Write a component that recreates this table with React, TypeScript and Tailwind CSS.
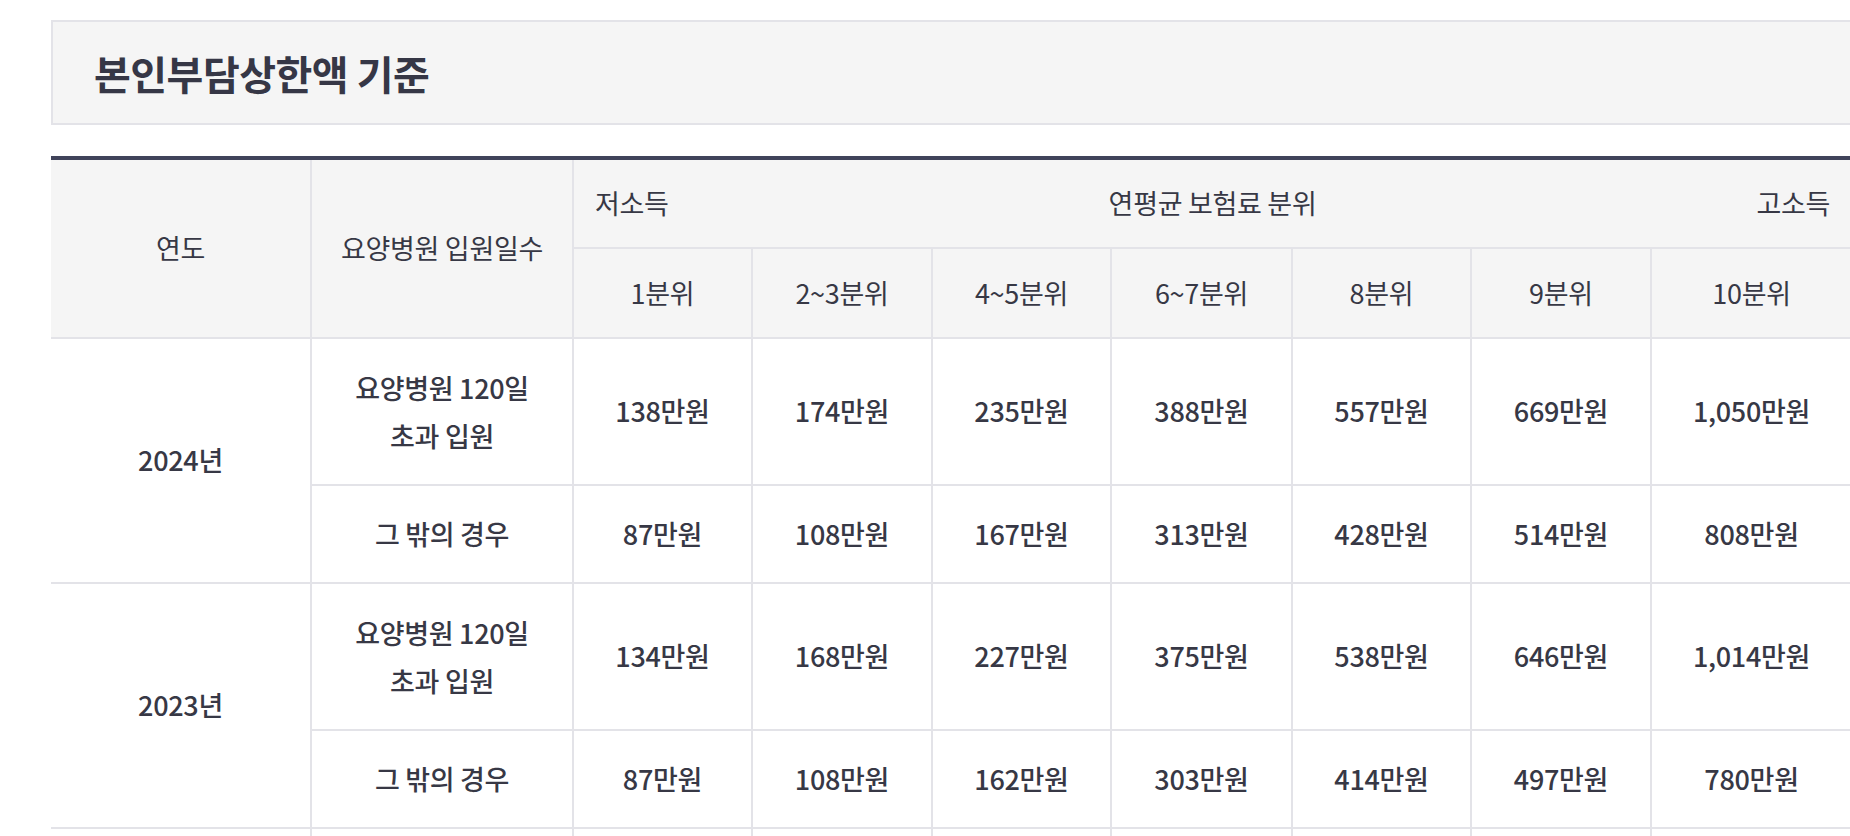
import React from 'react'

const font = { fontFamily: '"Noto Sans CJK KR", "Noto Sans", sans-serif' }

const quantiles = ['1분위', '2~3분위', '4~5분위', '6~7분위', '8분위', '9분위', '10분위']

const rows = [
  {
    year: '2024년',
    long: ['138만원', '174만원', '235만원', '388만원', '557만원', '669만원', '1,050만원'],
    other: ['87만원', '108만원', '167만원', '313만원', '428만원', '514만원', '808만원'],
  },
  {
    year: '2023년',
    long: ['134만원', '168만원', '227만원', '375만원', '538만원', '646만원', '1,014만원'],
    other: ['87만원', '108만원', '162만원', '303만원', '414만원', '497만원', '780만원'],
  },
]

const cell = 'border-2 border-[#e3e3e8] text-center align-middle'

const App = () => {
  return (
    <div className="w-[1850px] h-[836px] overflow-hidden bg-white pl-[51px] pt-[20px] text-[#373845]" style={font}>
      <div className="w-[1820px] h-[105px] flex items-center border-2 border-[#e3e3e8] bg-[#f5f5f5] pl-[41px]">
        <h2 className="text-[40px] font-bold tracking-[-0.5px] text-[#363746]">본인부담상한액 기준</h2>
      </div>

      <table className="mt-[31px] w-[1800px] table-fixed border-collapse border-t-4 border-t-[#40435a] text-[27px] tracking-[-0.3px]">
        <colgroup>
          <col className="w-[260px]" />
          <col className="w-[262px]" />
          <col className="w-[179px]" />
          <col className="w-[180px]" />
          <col className="w-[179px]" />
          <col className="w-[181px]" />
          <col className="w-[179px]" />
          <col className="w-[180px]" />
          <col className="w-[200px]" />
        </colgroup>
        <thead className="bg-[#f5f5f5]">
          <tr className="h-[90px]">
            <th rowSpan={2} className={`${cell} border-l-0 border-t-0 font-normal`}>연도</th>
            <th rowSpan={2} className={`${cell} border-t-0 font-normal`}>요양병원 입원일수</th>
            <th colSpan={7} className={`${cell} border-t-0 border-r-0 font-normal px-[21px]`}>
              <div className="flex items-center justify-between">
                <span>저소득</span>
                <span>연평균 보험료 분위</span>
                <span>고소득</span>
              </div>
            </th>
          </tr>
          <tr className="h-[90px]">
            {quantiles.map((q, i) => (
              <th key={q} className={`${cell} font-normal ${i === quantiles.length - 1 ? 'border-r-0' : ''}`}>
                {q}
              </th>
            ))}
          </tr>
        </thead>
        <tbody className="font-medium">
          {rows.map((r) => (
            <React.Fragment key={r.year}>
              <tr className="h-[147px]">
                <td rowSpan={2} className={`${cell} border-l-0`}>{r.year}</td>
                <td className={`${cell} leading-[48px]`}>
                  요양병원 120일
                  <br />
                  초과 입원
                </td>
                {r.long.map((v, i) => (
                  <td key={i} className={`${cell} ${i === r.long.length - 1 ? 'border-r-0' : ''}`}>{v}</td>
                ))}
              </tr>
              <tr className="h-[98px]">
                <td className={cell}>그 밖의 경우</td>
                {r.other.map((v, i) => (
                  <td key={i} className={`${cell} ${i === r.other.length - 1 ? 'border-r-0' : ''}`}>{v}</td>
                ))}
              </tr>
            </React.Fragment>
          ))}
          {/* next year group, below the fold */}
          <tr className="h-[147px]">
            <td className={`${cell} border-l-0`}></td>
            <td className={cell}></td>
            {quantiles.map((q, i) => (
              <td key={q} className={`${cell} ${i === quantiles.length - 1 ? 'border-r-0' : ''}`}></td>
            ))}
          </tr>
        </tbody>
      </table>
    </div>
  )
}

export default App
